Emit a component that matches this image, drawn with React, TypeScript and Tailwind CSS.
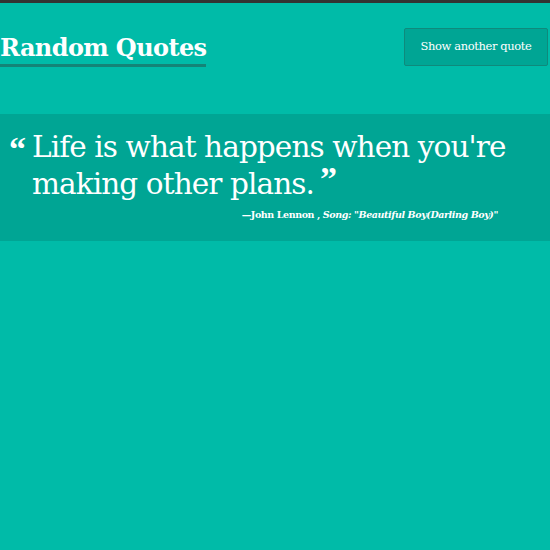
export default function App() {
  return (
    <div
      className="min-h-[550px] w-full border-t-[3px] border-[#333333] bg-[#00bba8] text-white"
      style={{ fontFamily: '"DejaVu Serif", "Liberation Serif", serif' }}
    >
      {/* header */}
      <header className="flex items-start justify-between pt-[25px] pr-[2px]">
        <h1 className="mt-[6px] border-b-[3px] border-[#148477] pb-[2px] text-[24px] font-bold leading-[28px] tracking-[-0.6px]">
          Random Quotes
        </h1>
        <button className="h-[38px] w-[144px] rounded-[2px] border border-[#0f8a7c] bg-[#00a594] text-[11.5px] tracking-[-0.4px] text-white">
          Show another quote
        </button>
      </header>

      {/* quote */}
      <section className="mt-[47px] h-[127px] bg-[#00a594] pt-[15px]">
        <div className="flex">
          <span
            className="w-[32px] pl-[9px] pt-[6px] text-[34px] font-bold leading-[28px]"
            style={{ fontFamily: '"Liberation Serif", serif' }}
          >
            &ldquo;
          </span>
          <p className="w-[505px] text-[29.5px] leading-[37px] tracking-[-0.9px]">
            Life is what happens when you're making other plans.
            <span
              className="ml-[6px] inline-block h-[16px] align-top text-[34px] font-bold leading-[26px]"
              style={{ fontFamily: '"Liberation Serif", serif' }}
            >
              &rdquo;
            </span>
          </p>
        </div>
        <p className="mt-[5px] pr-[52px] text-right text-[9.5px] font-bold tracking-[-0.4px]">
          &mdash;John Lennon ,{" "}
          <em>Song: "Beautiful Boy(Darling Boy)"</em>
        </p>
      </section>
    </div>
  );
}
